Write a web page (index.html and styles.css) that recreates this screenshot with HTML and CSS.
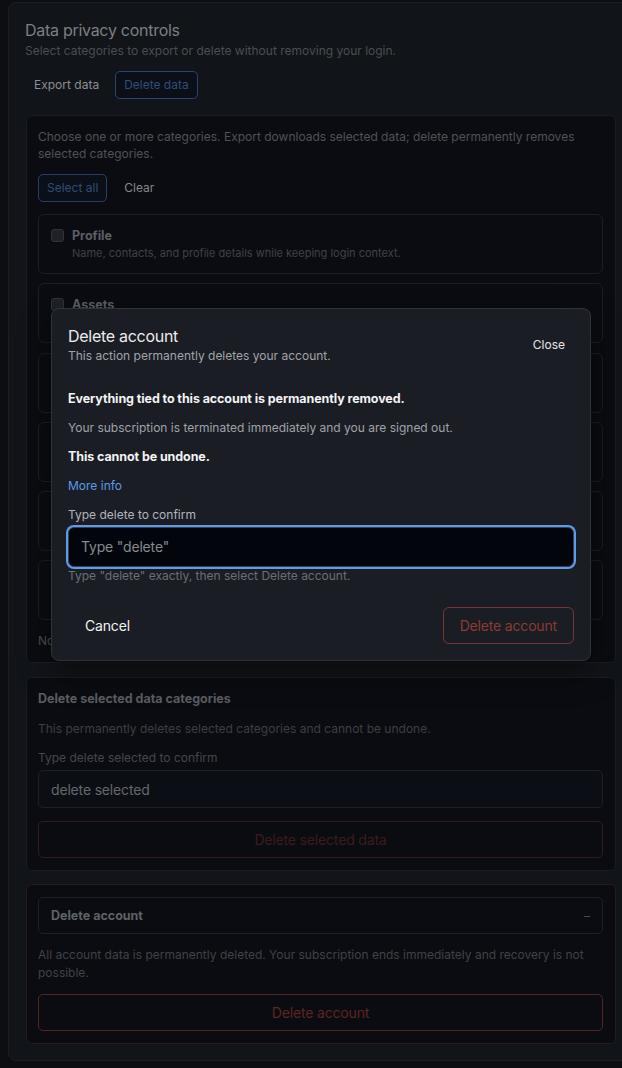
FILE: index.html
```html
<!DOCTYPE html>
<html lang="en">
<head>
<meta charset="utf-8">
<title>Data privacy controls</title>
<link rel="stylesheet" href="styles.css">
</head>
<body>
<main class="card">
  <header class="card-head">
    <h1 class="card-title">Data privacy controls</h1>
    <p class="card-sub">Select categories to export or delete without removing your login.</p>
  </header>

  <nav class="tabs">
    <button class="tab">Export data</button>
    <button class="tab is-active">Delete data</button>
  </nav>

  <section class="panel panel-cats">
    <p class="muted">Choose one or more categories. Export downloads selected data; delete permanently removes selected categories.</p>
    <div class="row-actions">
      <button class="btn-sm btn-sm-blue">Select all</button>
      <button class="btn-sm">Clear</button>
    </div>
    <ul class="cat-list">
      <li class="cat"><input type="checkbox" class="check"><div class="cat-text"><span class="cat-name">Profile</span><span class="cat-desc">Name, contacts, and profile details while keeping login context.</span></div></li>
      <li class="cat"><input type="checkbox" class="check"><div class="cat-text"><span class="cat-name">Assets</span><span class="cat-desc">Uploaded files, images, and documents stored in your workspace.</span></div></li>
      <li class="cat"><input type="checkbox" class="check"><div class="cat-text"><span class="cat-name">Activity</span><span class="cat-desc">Usage history, sessions, and event logs.</span></div></li>
      <li class="cat"><input type="checkbox" class="check"><div class="cat-text"><span class="cat-name">Messages</span><span class="cat-desc">Conversations, comments, and notifications.</span></div></li>
      <li class="cat"><input type="checkbox" class="check"><div class="cat-text"><span class="cat-name">Billing</span><span class="cat-desc">Invoices, receipts, and payment history.</span></div></li>
      <li class="cat"><input type="checkbox" class="check"><div class="cat-text"><span class="cat-name">Preferences</span><span class="cat-desc">Settings, integrations, and saved preferences.</span></div></li>
    </ul>
    <p class="muted empty">No categories selected.</p>
  </section>

  <section class="panel panel-form">
    <h2 class="panel-title">Delete selected data categories</h2>
    <p class="muted">This permanently deletes selected categories and cannot be undone.</p>
    <div class="field">
      <label class="field-label" for="del-sel">Type delete selected to confirm</label>
      <input id="del-sel" class="text-input" type="text" value="delete selected">
    </div>
    <button class="btn-block btn-block-dim">Delete selected data</button>
  </section>

  <section class="panel panel-danger">
    <div class="acc-head"><span class="acc-title">Delete account</span><span class="acc-toggle">–</span></div>
    <p class="muted tall">All account data is permanently deleted. Your subscription ends immediately and recovery is not possible.</p>
    <button class="btn-block btn-block-red">Delete account</button>
  </section>
</main>

<div class="modal" role="dialog" aria-labelledby="m-title">
  <div class="modal-head">
    <div>
      <h2 class="modal-title" id="m-title">Delete account</h2>
      <p class="modal-sub">This action permanently deletes your account.</p>
    </div>
    <button class="close">Close</button>
  </div>
  <div class="modal-body">
    <p class="strong">Everything tied to this account is permanently removed.</p>
    <p class="para">Your subscription is terminated immediately and you are signed out.</p>
    <p class="strong">This cannot be undone.</p>
    <p class="para"><a class="link" href="#">More info</a></p>
    <div class="confirm">
      <label class="confirm-label" for="confirm">Type delete to confirm</label>
      <input id="confirm" class="confirm-input" type="text" placeholder="Type &quot;delete&quot;">
      <p class="helper">Type "delete" exactly, then select Delete account.</p>
    </div>
  </div>
  <div class="modal-foot">
    <button class="btn btn-ghost">Cancel</button>
    <button class="btn btn-danger">Delete account</button>
  </div>
</div>
</body>
</html>
```

FILE: styles.css
```css
* { box-sizing: border-box; }
html, body { margin: 0; padding: 0; }
body {
  background: #0c0e12;
  font-family: Inter, Roboto, "Liberation Sans", sans-serif;
  height: 1068px;
  overflow: hidden;
  position: relative;
}
p, h1, h2, ul { margin: 0; padding: 0; }
button, input { font-family: inherit; }

.card {
  margin: 2px 0 0 8px;
  width: 626px;
  background: #111419;
  border: 1px solid #1b1e24;
  border-radius: 8px;
  padding: 16px 17px 16px;
}
.card-head { margin-left: -1px; }
.card-title { font-size: 16px; font-weight: 400; line-height: 22px; color: #7c7f84; letter-spacing: -0.28px; }
.card-sub { margin-top: 1px; font-size: 12px; line-height: 17px; color: #4b4e53; }

.tabs { display: flex; gap: 7px; margin: 12px 0 0 -1px; }
.tab {
  font-size: 12px; line-height: 18px;
  padding: 4px 8px;
  border: 1px solid transparent; border-radius: 5px;
  background: transparent; color: #8b8e92;
}
.tab.is-active { color: #2f4d78; border-color: #2a456b; background: #0b0f17; }

.panel {
  margin-top: 14px;
  background: #0a0c11;
  border: 1px solid #191c22;
  border-radius: 6px;
  padding: 12px 12px 12px 11px;
  display: flex; flex-direction: column; gap: 12px;
}
.panel-cats { margin-top: 16px; }
.muted { font-size: 12px; line-height: 17px; color: #4f5258; }
.muted.tall { line-height: 18px; color: #3f4247; }
.empty { line-height: 18px; }

.row-actions { display: flex; gap: 8px; }
.btn-sm {
  font-size: 12px; line-height: 18px;
  padding: 4px 8px;
  border: 1px solid transparent; border-radius: 5px;
  background: transparent; color: #85888c;
}
.btn-sm-blue { color: #2f4d78; border-color: #273f60; background: #0b0f17; }

.cat-list { list-style: none; display: flex; flex-direction: column; gap: 9.3px; }
.cat {
  display: flex; gap: 8px; align-items: flex-start;
  height: 60px;
  border: 1px solid #1b1e24; border-radius: 6px;
  padding: 12px;
}
.check {
  appearance: none; -webkit-appearance: none;
  margin: 2px 0 0; width: 13px; height: 13px; flex: none;
  background: #1e2126; border: 1px solid #303338; border-radius: 3px;
}
.cat-text { display: flex; flex-direction: column; }
.cat-name { font-size: 12.5px; font-weight: 700; line-height: 17px; color: #5c5f64; }
.cat-desc { margin-top: 1px; font-size: 11px; line-height: 17px; color: #3f4247; }

.panel-title { font-size: 12.5px; font-weight: 700; line-height: 17px; color: #5a5d62; }
.panel-form .muted { color: #3c3f44; margin-top: 1px; }
.field { display: flex; flex-direction: column; gap: 4px; }
.field-label { font-size: 12px; line-height: 17px; color: #44474c; }
.text-input {
  height: 38px; width: 100%;
  background: #0b0e14; border: 1px solid #1d2027; border-radius: 5px;
  padding: 0 12px; font-size: 14px; letter-spacing: -0.17px; color: #65686d;
}
.btn-block {
  width: 100%; height: 37px;
  font-size: 14px; letter-spacing: -0.17px; background: transparent;
  border: 1px solid; border-radius: 5px;
}
.btn-block-dim { color: #3e1b1b; border-color: #331a1b; margin-top: 1px; }

.panel-danger { border-color: #261b1d; margin-top: 13px; }
.acc-head {
  display: flex; justify-content: space-between; align-items: center;
  height: 37px; padding: 0 12px;
  border: 1px solid #1d2027; border-radius: 5px;
}
.acc-title { font-size: 12.5px; font-weight: 700; color: #5f6267; }
.acc-toggle { font-size: 12px; color: #4a4d52; }
.btn-block-red { color: #5c2622; border-color: #552420; }

/* modal */
.modal {
  position: absolute; left: 51px; top: 308px; width: 540px;
  background: #1a1d23;
  border: 1px solid #30333a; border-radius: 8px;
  padding: 16px;
  box-shadow: 0 12px 32px rgba(0, 0, 0, 0.45);
}
.modal-head { display: flex; justify-content: space-between; align-items: center; }
.modal-title { font-size: 16px; font-weight: 400; line-height: 22px; color: #ececee; letter-spacing: -0.28px; }
.modal-sub { font-size: 12px; line-height: 18px; color: #a1a4aa; }
.close {
  background: transparent; border: none; color: #e6e6e8;
  font-size: 12px; line-height: 18px; padding: 6px 9px;
}
.modal-body { margin-top: 24.5px; display: flex; flex-direction: column; gap: 12.1px; }
.strong { font-size: 12.5px; font-weight: 700; line-height: 17px; color: #f3f3f4; letter-spacing: -0.09px; }
.para { font-size: 12px; line-height: 17px; color: #a0a3a9; }
.link { color: #5b9be6; text-decoration: none; }
.confirm { display: flex; flex-direction: column; }
.confirm-label { font-size: 12px; line-height: 17px; color: #b3b6bb; margin-bottom: 4px; }
.confirm-input {
  height: 40px; width: 100%;
  background: #02050b; border: 1px solid #3c3f46; border-radius: 6px;
  box-shadow: 0 0 0 2px #5b9cf0;
  padding: 0 12px; font-size: 14px; letter-spacing: -0.17px; color: #e6e6e8; outline: none;
}
.confirm-input::placeholder { color: #878a90; }
.helper { font-size: 12px; line-height: 17px; color: #6c6f75; }
.modal-foot { margin-top: 23.5px; display: flex; justify-content: space-between; }
.btn {
  font-size: 14px; line-height: 19px; padding: 8px 16px; letter-spacing: -0.17px;
  border: 1px solid transparent; border-radius: 6px; background: transparent;
}
.btn-ghost { color: #f1f1f2; }
.btn-danger { color: #8c3b35; border-color: #7a3530; }
```
